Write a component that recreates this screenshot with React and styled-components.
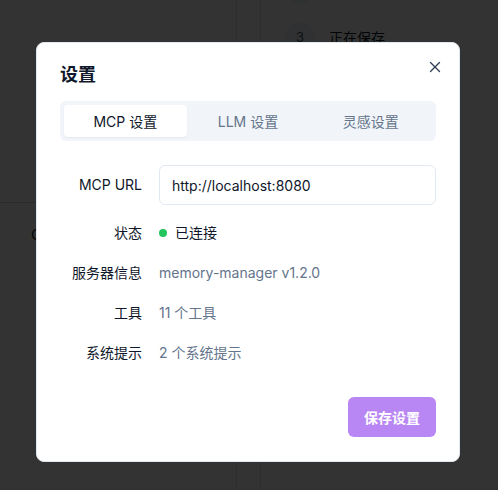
import styled, { createGlobalStyle } from "styled-components";
import { X } from "lucide-react";

const GlobalStyle = createGlobalStyle`
  html, body {
    margin: 0;
    padding: 0;
    height: 100%;
    background: #ffffff;
    font-family: Inter, "Noto Sans CJK SC", sans-serif;
    color: #0f172a;
  }
`;

// page behind the dialog
const Page = styled.div`
  display: flex;
  width: 498px;
  height: 490px;
  overflow: hidden;
  background: #ffffff;
`;

const LeftPane = styled.div`
  width: 236px;
  border-right: 1px solid #e4e4e7;
  display: flex;
  flex-direction: column;
`;

const LeftHeader = styled.div`
  height: 202px;
  border-bottom: 1px solid #d4d4d8;
`;

const LeftBody = styled.div`
  padding: 22px 0 0 31px;
  font-size: 15px;
  color: #111827;
`;

const Gap = styled.div`
  width: 23px;
  border-right: 1px solid #e4e4e7;
`;

const Steps = styled.ul`
  list-style: none;
  margin: -26px 0 0;
  padding: 0 0 0 24px;
  display: flex;
  flex-direction: column;
  gap: 18px;
`;

const Step = styled.li`
  display: flex;
  align-items: center;
  gap: 14px;
  font-size: 14px;
  color: #111827;
`;

const StepNum = styled.span`
  width: 30px;
  height: 30px;
  border-radius: 50%;
  background: #f1f5f9;
  display: flex;
  align-items: center;
  justify-content: center;
  font-size: 13px;
  color: #475569;
`;

const Overlay = styled.div`
  position: fixed;
  inset: 0;
  background: rgba(0, 0, 0, 0.8);
  display: flex;
  justify-content: flex-start;
  align-items: flex-start;
  padding: 42px 0 0 36px;
`;

const Dialog = styled.div`
  position: relative;
  box-sizing: border-box;
  width: 424px;
  height: 420px;
  background: #ffffff;
  border: 1px solid #e2e8f0;
  border-radius: 8px;
  padding: 23px 23px 24px;
  display: flex;
  flex-direction: column;
`;

const Close = styled.button`
  position: absolute;
  top: 15px;
  right: 15px;
  width: 18px;
  height: 18px;
  padding: 0;
  border: none;
  background: none;
  color: #334155;
  display: flex;
  align-items: center;
  justify-content: center;
  cursor: pointer;
`;

const Title = styled.h2`
  margin: 0;
  font-size: 18px;
  line-height: 18px;
  font-weight: 700;
  color: #0f172a;
`;

const TabList = styled.div`
  margin-top: 17px;
  height: 40px;
  box-sizing: border-box;
  padding: 4px;
  background: #f1f5f9;
  border-radius: 6px;
  display: grid;
  grid-template-columns: repeat(3, 1fr);
`;

const Tab = styled.button`
  border: none;
  border-radius: 4px;
  font-family: inherit;
  font-size: 14px;
  background: ${(p) => (p.$active ? "#ffffff" : "transparent")};
  color: ${(p) => (p.$active ? "#0f172a" : "#64748b")};
  box-shadow: ${(p) => (p.$active ? "0 1px 2px rgba(0,0,0,0.05)" : "none")};
  cursor: pointer;
`;

const Form = styled.div`
  margin-top: 24px;
  display: grid;
  grid-template-columns: 82px 1fr;
  column-gap: 17px;
  row-gap: 16px;
  align-items: center;
`;

const Label = styled.div`
  text-align: right;
  font-size: 14px;
  line-height: 24px;
  color: #0f172a;
`;

const Input = styled.input`
  box-sizing: border-box;
  height: 40px;
  width: 100%;
  border: 1px solid #e2e8f0;
  border-radius: 6px;
  padding: 0 12px;
  font-family: inherit;
  font-size: 14px;
  color: #0f172a;
  outline: none;
`;

const Value = styled.div`
  display: flex;
  align-items: center;
  gap: 8px;
  font-size: 14px;
  line-height: 24px;
  color: ${(p) => (p.$muted ? "#64748b" : "#0f172a")};
`;

const Dot = styled.span`
  width: 8px;
  height: 8px;
  border-radius: 50%;
  background: #22c55e;
`;

const Footer = styled.div`
  margin-top: auto;
  display: flex;
  justify-content: flex-end;
`;

const SaveButton = styled.button`
  height: 40px;
  padding: 0 16px;
  border: none;
  border-radius: 6px;
  background: #b987f4;
  color: #ffffff;
  font-family: inherit;
  font-size: 14px;
  font-weight: 600;
  cursor: pointer;
`;

export default function App() {
  return (
    <>
      <GlobalStyle />
      <Page>
        <LeftPane>
          <LeftHeader />
          <LeftBody>Q</LeftBody>
        </LeftPane>
        <Gap />
        <Steps>
          <Step>
            <StepNum />
          </Step>
          <Step>
            <StepNum>3</StepNum>
            正在保存
          </Step>
        </Steps>
      </Page>
      <Overlay>
        <Dialog>
          <Close aria-label="关闭">
            <X size={18} strokeWidth={1.8} />
          </Close>
          <Title>设置</Title>
          <TabList>
            <Tab $active>MCP 设置</Tab>
            <Tab>LLM 设置</Tab>
            <Tab>灵感设置</Tab>
          </TabList>
          <Form>
            <Label>MCP URL</Label>
            <Input defaultValue="http://localhost:8080" />
            <Label>状态</Label>
            <Value>
              <Dot />
              已连接
            </Value>
            <Label>服务器信息</Label>
            <Value $muted>memory-manager v1.2.0</Value>
            <Label>工具</Label>
            <Value $muted>11 个工具</Value>
            <Label>系统提示</Label>
            <Value $muted>2 个系统提示</Value>
          </Form>
          <Footer>
            <SaveButton>保存设置</SaveButton>
          </Footer>
        </Dialog>
      </Overlay>
    </>
  );
}
